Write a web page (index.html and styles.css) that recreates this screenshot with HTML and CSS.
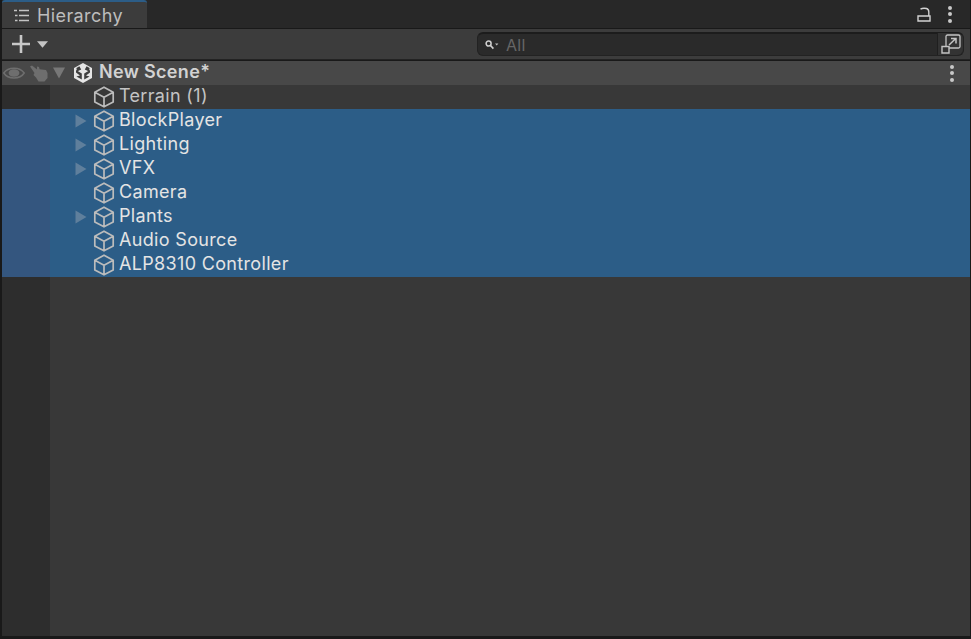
FILE: index.html
```html
<!DOCTYPE html>
<html lang="en">
<head>
<meta charset="utf-8">
<title>Hierarchy</title>
<link rel="stylesheet" href="styles.css">
</head>
<body>
<svg class="defs" width="0" height="0" aria-hidden="true">
  <defs>
    <symbol id="cube" viewBox="0 0 22 22">
      <path d="M11 1.2 20.2 6.2V16L11 20.8 1.8 16V6.2Z M1.8 6.2 11 11.2 20.2 6.2 M11 11.2V20.8" fill="none" stroke="currentColor" stroke-width="1.7" stroke-linejoin="round"/>
    </symbol>
    <symbol id="arrow" viewBox="0 0 12 14">
      <path d="M0.5 0.5 11.5 7 0.5 13.5Z" fill="currentColor"/>
    </symbol>
  </defs>
</svg>
<div class="window">
  <header class="tabbar">
    <div class="tab">
      <svg class="tab-icon" viewBox="0 0 16 13" width="16" height="13"><path d="M1 1.5H4M6 1.5H16M2 6.5H4.5M6 6.5H16M2 11.5H4.5M6 11.5H16" stroke="#c4c4c4" stroke-width="1.6" fill="none"/></svg>
      <span>Hierarchy</span>
    </div>
    <div class="tab-actions">
      <svg viewBox="0 0 14 15" width="14" height="15"><path d="M1 9H13V14H1Z" fill="none" stroke="#d2d2d2" stroke-width="1.4"/><path d="M3.5 2.2C5 1.2 7.5 1 9.5 1.5 11.5 2 11.8 3.5 11.8 5V9" fill="none" stroke="#d2d2d2" stroke-width="1.4"/></svg>
      <span class="kebab"><i></i><i></i><i></i></span>
    </div>
  </header>
  <div class="toolbar">
    <div class="add">
      <svg viewBox="0 0 18 18" width="18" height="18"><path d="M9 0V18M0 9H18" stroke="#c8c8c8" stroke-width="2.6"/></svg>
      <svg viewBox="0 0 12 7" width="11" height="7"><path d="M0 0H12L6 7Z" fill="#c4c4c4"/></svg>
    </div>
    <div class="search">
      <svg class="search-icon" viewBox="0 0 14 10" width="14" height="10"><circle cx="3.6" cy="3.6" r="2.5" fill="none" stroke="#cfcfcf" stroke-width="1.5"/><path d="M5.5 5.5 8.4 8.6" stroke="#cfcfcf" stroke-width="1.7"/><path d="M10 3.4H13.4L11.7 5.4Z" fill="#bdbdbd"/></svg>
      <span class="search-text">All</span>
      <div class="search-btn">
        <svg viewBox="0 0 20 20" width="20" height="20"><path d="M5 12V2.5C5 1.7 5.7 1 6.5 1H17.5C18.3 1 19 1.7 19 2.5V12.5C19 13.3 18.3 14 17.5 14H8" fill="none" stroke="#c4c4c4" stroke-width="1.3"/><path d="M1 12.5H8V19H1Z" fill="none" stroke="#c4c4c4" stroke-width="1.4"/><path d="M8 11 14.5 4.8M10 4.5H15V9.5" fill="none" stroke="#c4c4c4" stroke-width="1.5"/></svg>
      </div>
    </div>
  </div>
  <main class="tree">
    <div class="scene">
      <div class="scene-tools">
        <svg viewBox="0 0 22 14" width="22" height="14"><path d="M0.8 7C5 0.5 17 0.5 21.2 7 17 13.5 5 13.5 0.8 7Z" fill="none" stroke="#6e6e6e" stroke-width="1.5"/><ellipse cx="11" cy="7" rx="5.4" ry="3.8" fill="#6e6e6e"/></svg>
        <svg viewBox="0 0 18 17" width="18" height="17"><path d="M0 1.5 2 0.5 7 4.5V1.5L9 2 9.6 4.2 16 5 17.5 8V13L14.5 16.5H8.5L6 12.5 3.5 10 4.5 8Z" fill="#6e6e6e"/></svg>
        <svg viewBox="0 0 12 12" width="12" height="12"><path d="M0 0.5H12L6 11.5Z" fill="#777"/></svg>
      </div>
      <svg class="unity" viewBox="0 0 20 20" width="20" height="20">
        <path d="M10 0 19 5V15L10 20 1 15V5Z" fill="#e6e6e6"/>
        <path d="M3 7 8.8 10.4V16.4L3.4 13.4 7 12.6 3 9.6Z M17 7 11.2 10.4V16.4L16.6 13.4 13 12.6 17 9.6Z M6.4 3.2 8.2 6.4 4 8.4 3.4 5Z M13.6 3.2 11.8 6.4 16 8.4 16.6 5Z" fill="#3f3f3f"/>
      </svg>
      <span class="scene-name">New Scene*</span>
      <span class="kebab scene-kebab"><i></i><i></i><i></i></span>
    </div>
    <div class="row">
      <div class="gutter"></div>
      <span class="toggle"></span>
      <svg class="cube"><use href="#cube"/></svg>
      <span class="label">Terrain (1)</span>
    </div>
    <div class="row selected">
      <div class="gutter"></div>
      <span class="toggle"><svg width="12" height="14"><use href="#arrow"/></svg></span>
      <svg class="cube"><use href="#cube"/></svg>
      <span class="label">BlockPlayer</span>
    </div>
    <div class="row selected">
      <div class="gutter"></div>
      <span class="toggle"><svg width="12" height="14"><use href="#arrow"/></svg></span>
      <svg class="cube"><use href="#cube"/></svg>
      <span class="label">Lighting</span>
    </div>
    <div class="row selected">
      <div class="gutter"></div>
      <span class="toggle"><svg width="12" height="14"><use href="#arrow"/></svg></span>
      <svg class="cube"><use href="#cube"/></svg>
      <span class="label">VFX</span>
    </div>
    <div class="row selected">
      <div class="gutter"></div>
      <span class="toggle"></span>
      <svg class="cube"><use href="#cube"/></svg>
      <span class="label">Camera</span>
    </div>
    <div class="row selected">
      <div class="gutter"></div>
      <span class="toggle"><svg width="12" height="14"><use href="#arrow"/></svg></span>
      <svg class="cube"><use href="#cube"/></svg>
      <span class="label">Plants</span>
    </div>
    <div class="row selected">
      <div class="gutter"></div>
      <span class="toggle"></span>
      <svg class="cube"><use href="#cube"/></svg>
      <span class="label">Audio Source</span>
    </div>
    <div class="row selected">
      <div class="gutter"></div>
      <span class="toggle"></span>
      <svg class="cube"><use href="#cube"/></svg>
      <span class="label">ALP8310 Controller</span>
    </div>
    <div class="empty"><div class="gutter"></div></div>
  </main>
</div>
</body>
</html>
```
FILE: styles.css
```css
* { box-sizing: border-box; }
html, body { margin: 0; height: 100%; background: #191919; overflow: hidden; }
.defs { display: block; height: 0; }
.window {
  width: 971px;
  height: 639px;
  display: flex;
  flex-direction: column;
  padding: 0 1px 3px 2px;
  background: #191919;
  font-family: Inter, "Noto Sans", sans-serif;
  font-size: 18px;
  letter-spacing: 0.33px;
  color: #c4c4c4;
}
.tabbar {
  height: 28px;
  flex: none;
  display: flex;
  justify-content: space-between;
  background: #282828;
}
.tab {
  width: 145px;
  height: 28px;
  display: flex;
  align-items: center;
  gap: 8px;
  padding-left: 11px;
  background: #3c3c3c;
  border-top: 2px solid #2c5d87;
  border-radius: 3px 3px 0 0;
}
.tab span { color: #bdbdbd; letter-spacing: 0.4px; }
.tab-actions {
  display: flex;
  align-items: center;
  gap: 17px;
  padding: 0 18px 0 0;
}
.kebab { display: flex; flex-direction: column; gap: 2.5px; width: 4px; }
.kebab i { display: block; width: 4px; height: 4px; border-radius: 50%; background: #c8c8c8; }
.toolbar {
  height: 31px;
  flex: none;
  margin-top: 1px;
  display: flex;
  align-items: center;
  justify-content: space-between;
  padding: 0 6px 0 8px;
  background: #3c3c3c;
  border-bottom: 1px solid #232323;
}
.add { display: flex; align-items: center; gap: 7px; margin-left: 2px; }
.search {
  width: 487px;
  height: 24px;
  display: flex;
  align-items: center;
  background: #2a2a2a;
  border: 1px solid #222;
  border-top: 2px solid #1c1c1c;
  border-radius: 6px;
}
.search-icon { margin-left: 7px; flex: none; }
.search-text { flex: 1; margin-left: 7px; font-size: 16px; color: #666; letter-spacing: 0.3px; }
.search-btn {
  width: 26px;
  height: 22px;
  margin-top: -1px;
  display: flex;
  align-items: center;
  justify-content: center;
  background: #333;
  border-left: 1px solid #1f1f1f;
  border-radius: 0 6px 6px 0;
}
.tree { flex: 1; display: flex; flex-direction: column; margin-top: 1px; background: #383838; min-height: 0; }
.scene {
  height: 24px;
  flex: none;
  display: flex;
  align-items: center;
  background: #484848;
  padding-right: 16px;
}
.scene-tools { width: 70px; display: flex; align-items: center; gap: 5px; padding-left: 1px; flex: none; }
.unity { margin-left: 1px; flex: none; margin-top: -1px; }
.scene-name { margin-left: 6px; flex: 1; font-weight: 600; color: #d2d2d2; padding-bottom: 4px; }
.row { height: 24px; flex: none; display: flex; align-items: center; color: #c4c4c4; }
.gutter { width: 48px; height: 100%; flex: none; background: #2d2d2d; }
.toggle { width: 25px; margin-left: 25px; display: flex; align-items: center; flex: none; color: #5f7f9c; }
.cube { width: 22px; height: 22px; flex: none; color: #bcbcbc; margin-left: -7px; }
.label { margin-left: 4px; padding-bottom: 4px; }
.selected { background: #2c5d87; color: #e4e4e4; }
.selected .gutter { background: #34567f; }
.empty { flex: 1; display: flex; }
```
